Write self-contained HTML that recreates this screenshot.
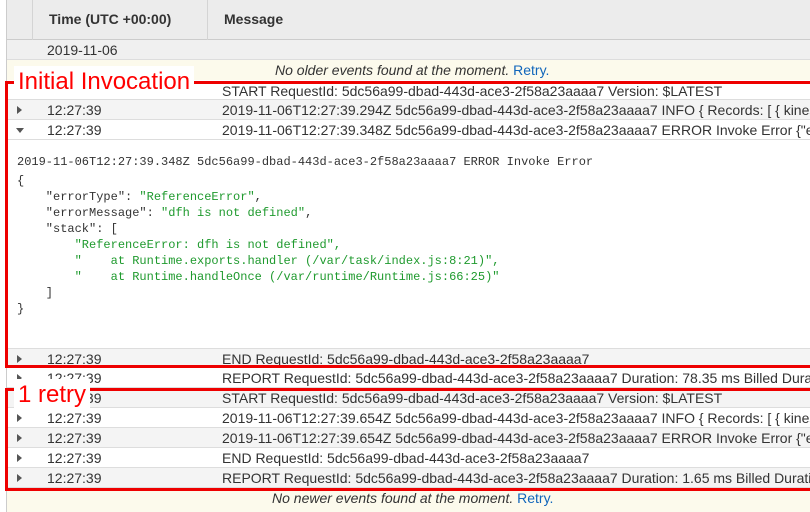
<!DOCTYPE html>
<html><head><style>
body{margin:0;width:810px;height:512px;overflow:hidden;background:#fff;font-family:"Liberation Sans",sans-serif;font-size:14px;color:#333;position:relative}
.a{position:absolute}
.row{position:absolute;left:7px;width:803px;height:20px;border-bottom:1px solid #ddd;box-sizing:border-box;white-space:nowrap;overflow:hidden}
.row .t{position:absolute;left:40px;top:2px}
.row .m{position:absolute;left:215px;top:2px}
.row .tri{position:absolute;left:10px;top:6px;width:0;height:0;border-left:5px solid #555;border-top:4px solid transparent;border-bottom:4px solid transparent}
.row .tri.d{border-top:5px solid #555;border-left:4px solid transparent;border-right:4px solid transparent;border-bottom:0;top:8px;left:9px}
.g{background:#f4f4f4}
pre{margin:0;font-family:"Liberation Mono",monospace;font-size:12px;line-height:16px;color:#333}
.s{color:#1f9a2e}
.lab{position:absolute;background:#fff;color:#f00;font-size:24px;line-height:32px;padding:0 4px}
.box{position:absolute;border:3px solid #e00;border-right:none;box-sizing:border-box}
</style></head><body>
<div class="a" style="left:6px;top:0;width:1px;height:512px;background:#ccc"></div>
<div class="a" style="left:7px;top:0;width:803px;height:40px;background:#ececec;border-bottom:1px solid #ccc;box-sizing:border-box"></div>
<div class="a" style="left:32px;top:0;width:1px;height:40px;background:#d4d4d4"></div>
<div class="a" style="left:207px;top:0;width:1px;height:40px;background:#d4d4d4"></div>
<div class="a" style="left:49px;top:11px;font-weight:bold;color:#333">Time (UTC +00:00)</div>
<div class="a" style="left:224px;top:11px;font-weight:bold;color:#333">Message</div>
<div class="row" style="top:40px;background:#f0f0f0;border-bottom-color:#ddd"><span class="t" style="left:40px">2019-11-06</span></div>
<div class="row" style="top:60px;background:#fcfaec;border:0"><span class="m" style="left:268px;font-style:italic">No older events found at the moment. <span style="color:#1166bb;font-style:normal">Retry.</span></span></div>
<div class="row" style="top:80px"><span class="m" style="top:3px">START RequestId: 5dc56a99-dbad-443d-ace3-2f58a23aaaa7 Version: $LATEST</span></div>
<div class="row g" style="top:100px"><span class="tri"></span><span class="t">12:27:39</span><span class="m">2019-11-06T12:27:39.294Z 5dc56a99-dbad-443d-ace3-2f58a23aaaa7 INFO { Records: [ { kinesis</span></div>
<div class="row" style="top:120px"><span class="tri d"></span><span class="t">12:27:39</span><span class="m">2019-11-06T12:27:39.348Z 5dc56a99-dbad-443d-ace3-2f58a23aaaa7 ERROR Invoke Error {"errorType"</span></div>
<pre class="a" style="left:17px;top:154px">2019-11-06T12:27:39.348Z 5dc56a99-dbad-443d-ace3-2f58a23aaaa7 ERROR Invoke Error</pre>
<pre class="a" style="left:17px;top:173px">{
    "errorType": <span class="s">"ReferenceError"</span>,
    "errorMessage": <span class="s">"dfh is not defined"</span>,
    "stack": [
        <span class="s">"ReferenceError: dfh is not defined",</span>
        <span class="s">"    at Runtime.exports.handler (/var/task/index.js:8:21)",</span>
        <span class="s">"    at Runtime.handleOnce (/var/runtime/Runtime.js:66:25)"</span>
    ]
}</pre>
<div class="row g" style="top:348px;border-top:1px solid #ddd"><span class="tri"></span><span class="t">12:27:39</span><span class="m">END RequestId: 5dc56a99-dbad-443d-ace3-2f58a23aaaa7</span></div>
<div class="row" style="top:368px"><span class="tri"></span><span class="t">12:27:39</span><span class="m">REPORT RequestId: 5dc56a99-dbad-443d-ace3-2f58a23aaaa7 Duration: 78.35 ms Billed Duration</span></div>
<div class="row g" style="top:388px"><span class="tri"></span><span class="t">12:27:39</span><span class="m">START RequestId: 5dc56a99-dbad-443d-ace3-2f58a23aaaa7 Version: $LATEST</span></div>
<div class="row" style="top:408px"><span class="tri"></span><span class="t">12:27:39</span><span class="m">2019-11-06T12:27:39.654Z 5dc56a99-dbad-443d-ace3-2f58a23aaaa7 INFO { Records: [ { kinesis</span></div>
<div class="row g" style="top:428px"><span class="tri"></span><span class="t">12:27:39</span><span class="m">2019-11-06T12:27:39.654Z 5dc56a99-dbad-443d-ace3-2f58a23aaaa7 ERROR Invoke Error {"errorType"</span></div>
<div class="row" style="top:448px"><span class="tri"></span><span class="t">12:27:39</span><span class="m">END RequestId: 5dc56a99-dbad-443d-ace3-2f58a23aaaa7</span></div>
<div class="row g" style="top:468px"><span class="tri"></span><span class="t">12:27:39</span><span class="m">REPORT RequestId: 5dc56a99-dbad-443d-ace3-2f58a23aaaa7 Duration: 1.65 ms Billed Duration</span></div>
<div class="row" style="top:488px;background:#fcfaec;border:0;height:24px"><span class="m" style="left:265px;font-style:italic">No newer events found at the moment. <span style="color:#1166bb;font-style:normal">Retry.</span></span></div>
<div class="box" style="left:5px;top:81px;width:810px;height:287px"></div>
<div class="box" style="left:5px;top:388px;width:810px;height:103px"></div>
<div class="lab" style="left:14px;top:66px">Initial Invocation</div>
<div class="lab" style="left:14px;top:379px">1 retry</div>
</body></html>
